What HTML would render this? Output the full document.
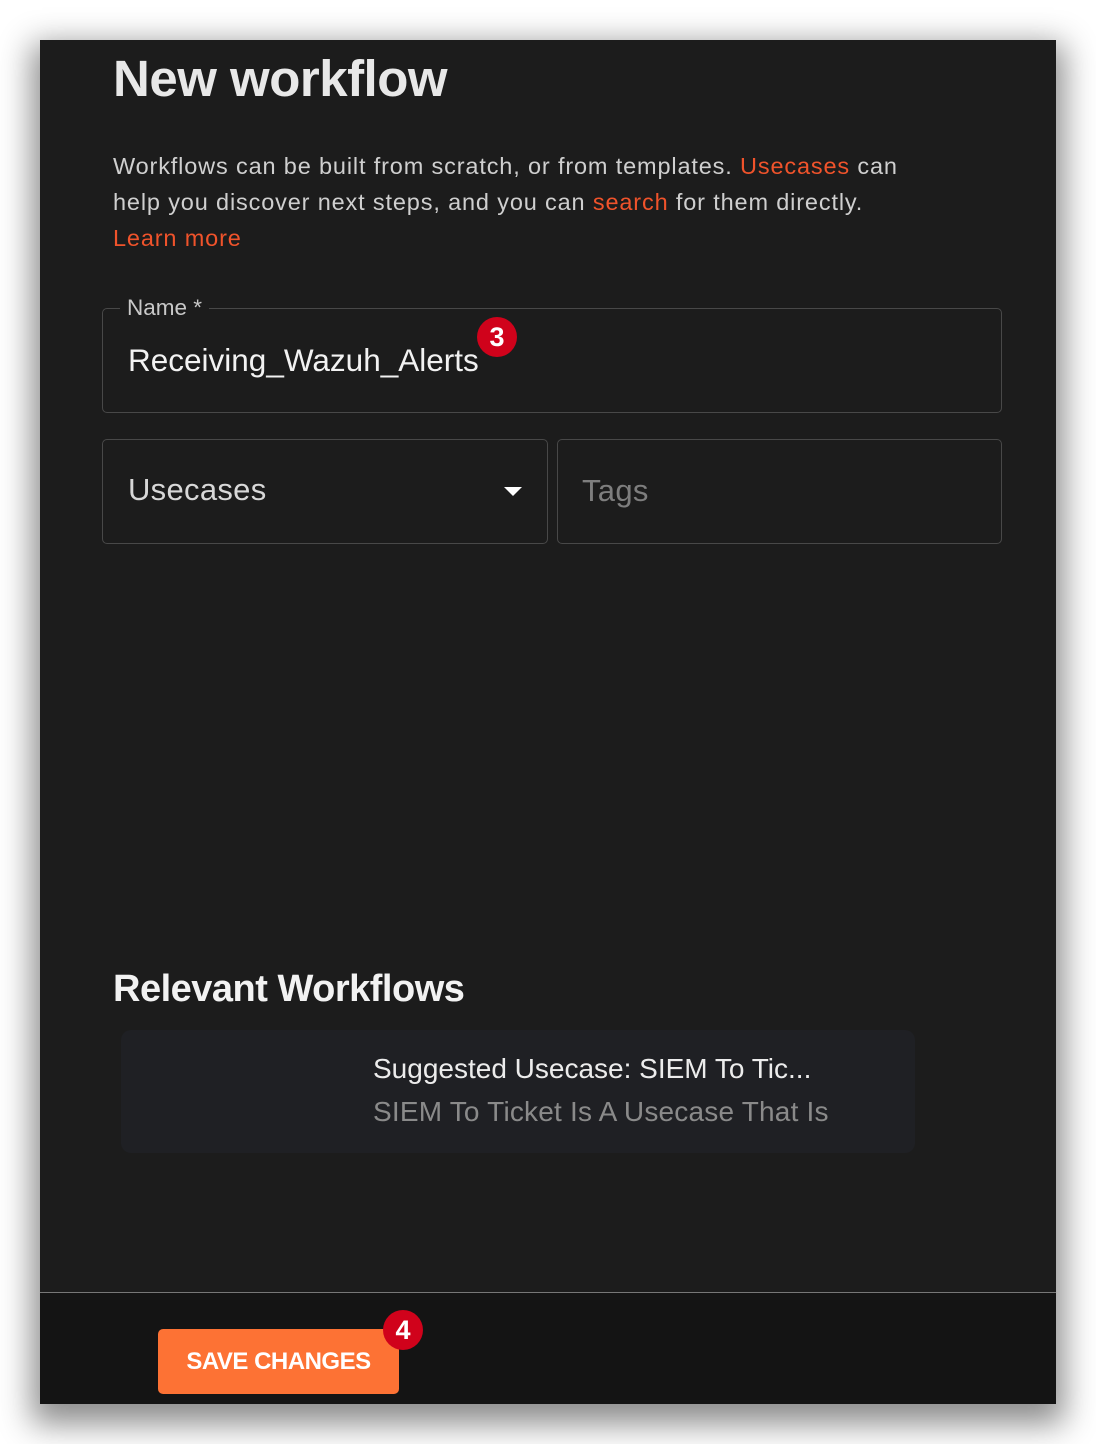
<!DOCTYPE html>
<html><head><meta charset="utf-8"><style>
*{box-sizing:border-box;margin:0;padding:0}
body{width:1096px;height:1444px;background:#fff;position:relative;overflow:hidden;font-family:"Liberation Sans",Roboto,sans-serif}
.panel{position:absolute;left:40px;top:40px;width:1016px;height:1364px;background:#1c1c1c;box-shadow:0 12px 30px 8px rgba(0,0,0,.45);overflow:hidden}
.abs{position:absolute}
h1{position:absolute;left:73px;top:9px;font-size:51px;font-weight:bold;color:#e8e8e8;letter-spacing:-0.5px}
.desc{left:73px;top:108px;width:950px;font-size:23.5px;line-height:36px;color:#cfcfcf;letter-spacing:0.85px;white-space:nowrap}
.o{color:#f0532b}
.box{border:1px solid #484848;border-radius:5px}
.badge{width:40px;height:40px;border-radius:50%;background:#d0021b;color:#fff;font-size:27px;text-align:center;line-height:40px;font-weight:bold}
</style></head><body>
<div class="panel">
<h1>New workflow</h1>
<div class="abs desc">Workflows can be built from scratch, or from templates. <span class="o">Usecases</span> can<br>help you discover next steps, and you can <span class="o">search</span> for them directly.<br><span class="o">Learn more</span></div>
<div class="abs box" style="left:62px;top:268px;width:900px;height:105px"></div>
<div class="abs" style="left:80px;top:253px;background:#1c1c1c;padding:0 7px;font-size:22.5px;color:#c8c8c8;line-height:30px">Name *</div>
<div class="abs" style="left:88px;top:302px;font-size:31.5px;color:#f2f2f2;letter-spacing:0px">Receiving_Wazuh_Alerts</div>
<div class="abs badge" style="left:437px;top:277px">3</div>
<div class="abs box" style="left:62px;top:399px;width:446px;height:105px"></div>
<div class="abs" style="left:88px;top:432px;font-size:31px;color:#d8d8d8;letter-spacing:0.3px">Usecases</div>
<div class="abs" style="left:464px;top:447px;width:0;height:0;border-left:9px solid transparent;border-right:9px solid transparent;border-top:9px solid #fff"></div>
<div class="abs box" style="left:517px;top:399px;width:445px;height:105px"></div>
<div class="abs" style="left:542px;top:433px;font-size:31px;color:#7e7e7e;letter-spacing:0.3px">Tags</div>
<div class="abs" style="left:73px;top:928px;font-size:38px;font-weight:bold;color:#f2f2f2;letter-spacing:-0.5px">Relevant Workflows</div>
<div class="abs" style="left:81px;top:990px;width:794px;height:123px;background:#1f2024;border-radius:10px"></div>
<div class="abs" style="left:333px;top:1013px;font-size:28px;color:#ececec">Suggested Usecase: SIEM To Tic...</div>
<div class="abs" style="left:333px;top:1056px;font-size:28px;color:#8a8a8a;letter-spacing:0.2px">SIEM To Ticket Is A Usecase That Is</div>
<div class="abs" style="left:0;top:1252px;width:1016px;height:112px;background:#141414;border-top:1px solid #777"></div>
<div class="abs" style="left:118px;top:1289px;width:241px;height:65px;background:#fd7234;border-radius:5px;color:#fff;font-size:24px;font-weight:bold;text-align:center;line-height:65px;letter-spacing:-0.5px">SAVE CHANGES</div>
<div class="abs badge" style="left:343px;top:1270px">4</div>
</div>
</body></html>
